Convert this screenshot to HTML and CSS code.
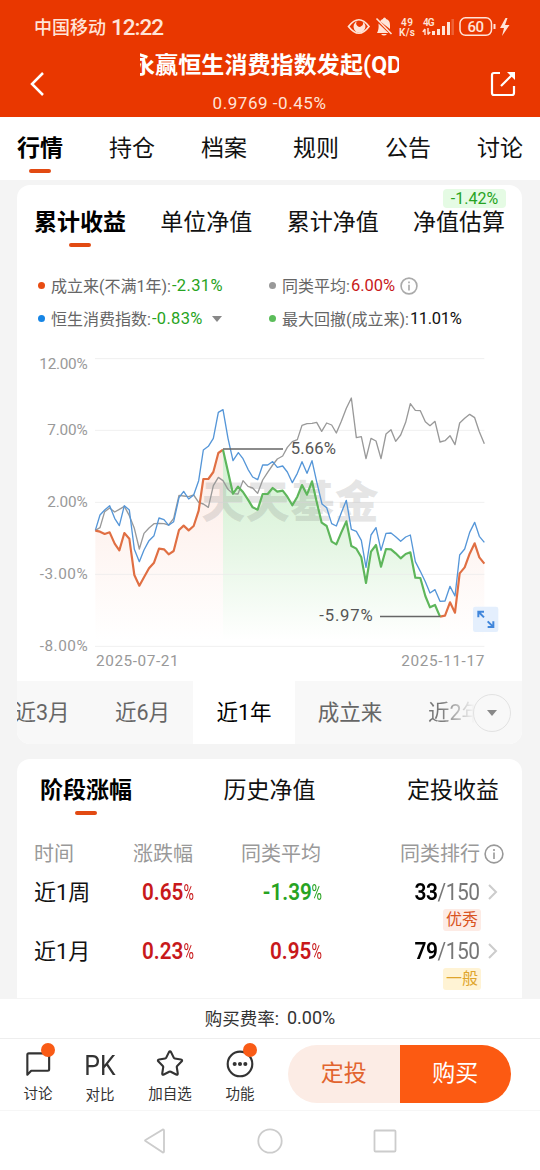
FILE: index.html
```html
<!DOCTYPE html>
<html lang="zh-CN">
<head>
<meta charset="utf-8">
<meta name="viewport" content="width=device-width">
<title>基金详情</title>
<link rel="stylesheet" href="styles.css">
</head>
<body>
<div class="screen">
  <header class="header">
    <div class="status">
      <span class="carrier">中国移动</span><span class="clock">12:22</span>
      <svg class="status-icons" width="166" height="24" viewBox="0 0 166 24" fill="none" stroke="#ffe4d8">
        <path d="M1.500 12.500Q12-1 22 12.500Q12 26 1.500 12.500Z" stroke-width="1.700"/>
        <path d="M10.500 7a6 6 0 1 0 5 .5a3 3 0 0 1-1 4.500a3 3 0 0 1-4-5Z" fill="#ffe4d8" stroke="none"/>
        <path d="M33 7.200Q35 5 36 5a1.500 1.500 0 0 1 3 0Q43 6 43 11v4ZM31.500 9.500L41.500 19H30Q32 16 31.500 9.500ZM34 20h6q-3 3-6 0Z" fill="#ffe4d8" stroke="none"/>
        <path d="M29.500 4.500L44.500 20" stroke-width="1.600"/>
        <g class="tiny" fill="#ffe4d8" stroke="none"><text x="54" y="12" textLength="12">49</text><text x="52" y="21.500" textLength="16">K/s</text><text x="76" y="11.500" textLength="11.500">4G</text></g>
        <path d="M78 15v6M75.800 18l2.200-3M81 14v6.500M83.200 18L81 20.500" stroke-width="1.400"/>
        <path d="M86.500 17v4M91.500 15v6M96.500 12v9M101.500 8v13" stroke-width="3"/>
        <path d="M105.700 5v16" stroke-width="2.500" opacity=".25"/>
        <rect x="113" y="3.800" width="31.500" height="17.500" rx="5.500" stroke-width="1.500"/>
        <path d="M147.500 10v5" stroke-width="2"/>
        <text class="battery" x="120.500" y="18" textLength="16.500" fill="#ffe4d8" stroke="none">60</text>
        <path d="M158.500 4L153 14h4l-2 8 7.500-11h-4.500l2.500-7Z" fill="#ffe4d8" stroke="none"/>
      </svg>
    </div>
    <div class="titlebar">
      <svg class="back" width="16" height="26" viewBox="0 0 16 26"><path d="M14 2L3 13l11 11" fill="none" stroke="#fff" stroke-width="2.500"/></svg>
      <div class="title-block">
        <div class="title-clip"><h1 class="title">永赢恒生消费指数发起(QD</h1></div>
        <div class="quote">0.9769 -0.45%</div>
      </div>
      <svg class="share" width="26" height="26" viewBox="0 0 26 26" fill="none" stroke="#fff" stroke-width="2.200"><path d="M10 2H4Q2 2 2 4v18q0 2 2 2h18q2 0 2-2v-7M11 15L23 3"/><path d="M17 1h8v8Z" fill="#fff" stroke="none"/></svg>
    </div>
  </header>

  <nav class="tabs">
    <span class="tab active">行情</span><span class="tab">持仓</span><span class="tab">档案</span><span class="tab">规则</span><span class="tab">公告</span><span class="tab">讨论</span>
  </nav>

  <main class="content">
    <section class="card">
      <div class="card-tabs">
        <span class="tab active">累计收益</span><span class="tab">单位净值</span><span class="tab">累计净值</span><span class="tab">净值估算<em class="tag">-1.42%</em></span>
      </div>
      <div class="legend">
        <div class="legend-item"><i class="dot orange"></i><span class="name">成立来(不满1年):</span><span class="num down">-2.31%</span></div>
        <div class="legend-item"><i class="dot gray"></i><span class="name">同类平均:</span><span class="num up">6.00%</span>
          <svg class="info" width="18" height="18" viewBox="0 0 20 20"><circle cx="10" cy="10" r="8.800"/><path d="M10 8.500V15M10 5v2"/></svg></div>
        <div class="legend-item"><i class="dot blue"></i><span class="name">恒生消费指数:</span><span class="num down">-0.83%</span><i class="caret"></i></div>
        <div class="legend-item"><i class="dot green"></i><span class="name">最大回撤(成立来):</span><span class="num plain">11.01%</span></div>
      </div>
      <svg class="chart" width="500" height="336" viewBox="0 0 1500 1008">
        <defs>
          <linearGradient id="warm" gradientUnits="userSpaceOnUse" x1="0" y1="314" x2="0" y2="885"><stop offset="0" stop-color="#fdebe5"/><stop offset=".5" stop-color="#fef5f2"/><stop offset="1" stop-color="#fff"/></linearGradient>
          <linearGradient id="cool" gradientUnits="userSpaceOnUse" x1="0" y1="314" x2="0" y2="885"><stop offset="0" stop-color="#d0f0d0"/><stop offset=".5" stop-color="#e5f6e4"/><stop offset="1" stop-color="#fff"/></linearGradient>
        </defs>
        <path fill="url(#warm)" d="M226 557L240 560 254 567 269 562 284 596 298 616 313 564 328 581 343 690 358 722 372 697 387 670 402 653 417 611 432 613 446 628 461 618 477 555 491 542 506 556 521 543 536 497 550 402 565 402 580 381 595 324 609 314V885H226ZM1260 815L1275 812 1290 772 1305 803 1319 685 1334 667 1349 626 1364 595 1378 637 1393 656V885H1260Z"/>
        <path fill="url(#cool)" d="M609 314L624 380 639 446 654 425 669 441 684 464 698 487 713 494 728 447 743 447 758 429 772 440 788 437 802 455 817 481 832 455 846 420 861 449 876 409 890 470 905 533 920 543 935 590 949 598 964 562 979 529 994 603 1009 611 1024 637 1038 714 1053 620 1068 600 1083 665 1098 612 1113 613 1127 625 1142 640 1157 627 1171 622 1186 698 1201 699 1216 753 1230 787 1245 780 1260 815V885H609Z"/>
        <path class="grid" d="M225 41H1393M225 256H1393M225 472H1393M225 688H1393M225 904H1393"/>
        <text class="watermark" x="544" y="519" textLength="532">天天基金</text>
        <polyline class="line average" points="226,556 240,548 254,500 269,489 284,501 298,493 313,484 328,512 343,550 358,612 372,565 387,549 402,536 417,535 432,536 446,540 461,520 477,451 491,453 506,455 521,450 536,472 550,477 565,487 580,422 595,397 609,407 624,433 639,446 654,447 669,407 684,424 698,429 713,445 728,405 743,382 758,360 772,342 788,333 802,307 817,290 832,284 846,241 861,236 876,235 890,232 905,259 920,234 935,240 949,264 964,229 979,190 994,159 1009,278 1024,275 1038,341 1053,280 1068,288 1083,341 1098,267 1113,254 1127,289 1142,270 1157,232 1171,176 1186,196 1201,197 1216,230 1230,242 1245,229 1260,291 1275,287 1290,272 1305,299 1319,234 1334,220 1349,208 1364,218 1378,260 1393,296"/>
        <polyline class="line index" points="226,556 240,510 254,495 269,482 284,520 298,542 313,482 328,495 343,613 358,650 372,615 387,587 402,572 417,519 432,524 446,541 461,530 477,458 491,439 506,462 521,450 536,407 550,315 565,304 580,280 595,202 609,194 624,280 639,347 655,323 669,341 684,373 698,396 713,404 728,360 743,360 758,350 772,367 788,363 802,381 817,413 832,385 846,350 861,385 876,347 890,410 906,477 920,488 935,536 949,543 964,503 979,466 994,553 1009,559 1024,586 1038,667 1053,570 1068,548 1083,616 1098,565 1113,564 1127,575 1142,589 1157,576 1171,570 1186,650 1201,679 1216,710 1230,744 1245,734 1260,769 1275,768 1290,724 1305,753 1319,630 1334,612 1349,562 1364,532 1378,574 1393,592"/>
        <path class="line fund" d="M226 557L240 560 254 567 269 562 284 596 298 616 313 564 328 581 343 690 358 722 372 697 387 670 402 653 417 611 432 613 446 628 461 618 477 555 491 542 506 556 521 543 536 497 550 402 565 402 580 381 595 324 609 314M1260 815L1275 812 1290 772 1305 803 1319 685 1334 667 1349 626 1364 595 1378 637 1393 656"/>
        <polyline class="line drawdown" points="609,314 624,380 639,446 654,425 669,441 684,464 698,487 713,494 728,447 743,447 758,429 772,440 788,437 802,455 817,481 832,455 846,420 861,449 876,409 890,470 905,533 920,543 935,590 949,598 964,562 979,529 994,603 1009,611 1024,637 1038,714 1053,620 1068,600 1083,665 1098,612 1113,613 1127,625 1142,640 1157,627 1171,622 1186,698 1201,699 1216,753 1230,787 1245,780 1260,815"/>
        <path class="leader" d="M609 312H789M1080 814.500H1260"/>
        <g class="callout"><text x="812" y="328" textLength="136">5.66%</text><text x="898" y="829" textLength="160">-5.97%</text></g>
        <g class="axis">
          <text x="58" y="73" textLength="145">12.00%</text><text x="82" y="269" textLength="121">7.00%</text><text x="82" y="485" textLength="121">2.00%</text><text x="59" y="701" textLength="144">-3.00%</text><text x="59" y="917" textLength="144">-8.00%</text>
          <text x="228" y="963" textLength="248">2025-07-21</text><text x="1144" y="963" textLength="249">2025-11-17</text>
        </g>
        <rect x="1359" y="785" width="76" height="76" rx="7" fill="#e4effd"/>
        <path d="M1375 817V800H1392M1376 801L1392 817M1403 846H1420V829M1419 845L1403 829" fill="none" stroke="#4086db" stroke-width="6"/>
      </svg>
      <div class="periods">
        <span class="period">近3月</span><span class="period">近6月</span><span class="period current">近1年</span><span class="period">成立来</span><span class="period fading">近2年</span>
        <span class="more"><i class="caret"></i></span>
      </div>
    </section>

    <section class="card stage">
      <div class="card-tabs stage-tabs"><span class="tab active">阶段涨幅</span><span class="tab">历史净值</span><span class="tab">定投收益</span></div>
      <div class="row head"><span>时间</span><span class="cell">涨跌幅</span><span class="cell">同类平均</span><span class="cell rank">同类排行</span>
        <svg class="info" width="20" height="20" viewBox="0 0 20 20"><circle cx="10" cy="10" r="8.900"/><path d="M10 8.500V15M10 5v2"/></svg></div>
      <div class="row data"><span class="when">近1周</span><b class="cell up"><span class="fig">0.65<small>%</small></span></b><b class="cell down"><span class="fig">-1.39<small>%</small></span></b><span class="cell rank"><span class="place"><b>33</b><span class="total">/150</span></span></span><svg class="go" width="10" height="16" viewBox="0 0 10 16"><path d="M1 1l7 7-7 7"/></svg></div>
      <div class="badge-line"><span class="badge good">优秀</span></div>
      <div class="row data"><span class="when">近1月</span><b class="cell up"><span class="fig">0.23<small>%</small></span></b><b class="cell up"><span class="fig">0.95<small>%</small></span></b><span class="cell rank"><span class="place"><b>79</b><span class="total">/150</span></span></span><svg class="go" width="10" height="16" viewBox="0 0 10 16"><path d="M1 1l7 7-7 7"/></svg></div>
      <div class="badge-line"><span class="badge fair">一般</span></div>
    </section>
  </main>

  <div class="fee"><span>购买费率:</span><span class="fee-num">0.00%</span></div>

  <footer class="actions">
    <div class="action"><svg width="32" height="32" viewBox="0 0 32 32"><path d="M5 27.500V7q0-1.500 1.500-1.500H26q1.500 0 1.500 1.500v15q0 1.500-1.500 1.500H9Z"/></svg><i class="notice"></i><span>讨论</span></div>
    <div class="action pk"><strong>PK</strong><span>对比</span></div>
    <div class="action star"><svg width="32" height="32" viewBox="0 0 32 32"><path d="M14.800 4.500q1.200-2 2.400 0L20 10.200q.3.600 1 .700l6.200 1q2.200.400.700 2.100l-4.500 4.500q-.5.500-.4 1.200l1 6.500q.2 2-1.600 1.200L16.800 24.500q-.8-.4-1.600 0L9.600 27.400q-1.800.800-1.600-1.200l1-6.500q.1-.7-.4-1.200L4.100 14q-1.500-1.700.7-2.100l6.200-1q.7-.1 1-.7Z"/></svg><span>加自选</span></div>
    <div class="action more-action"><svg width="32" height="32" viewBox="0 0 32 32"><circle cx="16" cy="16.500" r="12.700"/><path class="dots" d="M10.500 16.500h.01M16 16.500h.01M21.500 16.500h.01"/></svg><i class="notice"></i><span>功能</span></div>
    <div class="buttons"><span class="plan">定投</span><span class="buy">购买</span></div>
  </footer>

  <div class="sysnav">
    <svg width="26" height="28" viewBox="0 0 26 28"><path d="M3.500 14Q2.500 13.500 3.500 13L21 2.500q1 0 1 1v21q0 1-1 1Z"/></svg>
    <svg width="28" height="28" viewBox="0 0 28 28"><circle cx="14" cy="14" r="11.700"/></svg>
    <svg width="26" height="28" viewBox="0 0 26 28"><rect x="2.500" y="3.500" width="21" height="21" rx="1"/></svg>
  </div>
</div>
</body>
</html>
```

FILE: styles.css
```css
* { box-sizing: border-box; }
body { margin: 0; font-family: Roboto, "Noto Sans CJK SC", sans-serif; color: #111; background: #f4f4f4; }
.screen { display: flex; flex-direction: column; width: 540px; height: 1170px; overflow: hidden; }
em, i { font-style: normal; }
.up { color: #c8191b; }
.down { color: #27a322; }

.header { height: 117px; background: #e93700; color: #fff; }
.status { display: flex; align-items: center; height: 52px; padding: 0 27px 0 34px; color: #ffe4d8; }
.carrier { font-size: 18px; font-weight: 500; }
.clock { margin-left: 5px; padding-top: 2px; font-size: 22.500px; font-weight: 500; line-height: 26px; letter-spacing: -1px; }
.status-icons { margin-left: auto; }
.tiny { font-size: 10px; font-weight: 600; }
.battery { font-size: 15px; font-weight: 500; }
.titlebar { display: flex; padding: 0 24px 0 29px; }
.back { margin-top: 19px; }
.share { margin: 19px 0 0 auto; }
.title-block { margin-left: 95px; width: 259px; }
.title-clip { height: 32px; overflow: hidden; }
.title { margin: 0 0 0 -8px; font-size: 23px; line-height: 28px; font-weight: 700; white-space: nowrap; letter-spacing: .1px; }
.quote { text-align: center; font-size: 17px; line-height: 39px; letter-spacing: .55px; color: #ffe4d8; }

.tabs { display: flex; justify-content: space-between; height: 63px; padding: 14px 17px 0; background: #fff; }
.tab { position: relative; font-size: 23px; line-height: 36px; white-space: nowrap; color: #111; }
.tab.active { font-weight: 700; color: #000; }
.tab.active::after { content: ""; position: absolute; left: calc(50% - 11px); top: 38px; width: 22px; height: 4px; border-radius: 2px; background: #e24a12; }

.content { display: flex; flex-direction: column; gap: 15px; height: 818px; padding: 5px 18px 0 17px; overflow: hidden; }
.card { flex: none; border-radius: 13px; background: #fff; overflow: hidden; }
.card-tabs { display: flex; justify-content: space-between; height: 87px; padding: 20px 17px 0; }
.tag { position: absolute; right: -1px; top: -16px; width: 63px; border-radius: 4px; background: #e5fbe4; color: #27a322; text-align: center; font-size: 16px; line-height: 20px; height: 19px; }
.legend { display: grid; grid-template-columns: 231px 1fr; grid-auto-rows: 33px; height: 73px; padding: 0 0 0 21px; margin-top: -3px; }
.legend-item { display: flex; align-items: center; font-size: 16px; white-space: nowrap; color: #666; }
.name { margin-top: -2px; }
.dot { width: 7px; height: 7px; margin-right: 6px; border-radius: 50%; }
.dot.orange { background: #e84c12; }
.dot.blue { background: #1685e5; }
.dot.gray { background: #999; }
.dot.green { background: #5bbd5a; }
.num { margin-left: 1px; font-size: 16.500px; }
.num.down { letter-spacing: .35px; }
.num.plain { color: #111; letter-spacing: -.35px; }
.info { fill: none; stroke: #aaa; stroke-width: 1.800; }
.legend .info { margin-left: 5px; }
.caret { width: 0; height: 0; border: 5px solid transparent; border-top: 6px solid #888; border-bottom: 0; }
.legend .caret { margin-left: 9px; }

.chart { display: block; margin: 3px 0 0 3px; }
.grid { stroke: #e9e9e9; stroke-opacity: .75; stroke-width: 3; }
.watermark { font-family: "Noto Sans CJK SC", sans-serif; font-size: 132px; font-weight: 900; fill: #777; fill-opacity: .19; }
.line { fill: none; stroke-linejoin: round; }
.average { stroke: #999; stroke-width: 4; }
.index { stroke: #5596d8; stroke-width: 4; }
.fund { stroke: #e06f43; stroke-width: 6.500; }
.drawdown { stroke: #5eb65b; stroke-width: 6.500; }
.leader { stroke: #666; stroke-width: 4; }
.callout { font-size: 50px; fill: #555; }
.axis { font-size: 46px; fill: #999; }

.periods { position: relative; display: flex; height: 63px; background: #f8f8f8; }
.period { flex: none; width: 102px; text-align: center; font-size: 21.500px; line-height: 64px; color: #666; }
.period:first-child { width: 74px; margin-left: -12px; }
.period:nth-child(2) { width: 114px; padding-left: 13px; }
.period.current { background: #fff; color: #000; }
.period:nth-child(4) { width: 110px; }
.period.fading { width: 60px; text-align: left; margin-left: 23px; background: linear-gradient(90deg, #777 20%, #f8f8f8 78%); -webkit-background-clip: text; background-clip: text; color: transparent; }
.more { position: absolute; left: 456px; top: 13px; display: flex; align-items: center; justify-content: center; width: 38px; height: 38px; border: 1px solid #e2e2e2; border-radius: 50%; background: #f8f8f8; }

.stage { height: 260px; border-radius: 13px 13px 0 0; }
.stage-tabs { height: 79px; padding: 14px 23px 0; }
.row { display: grid; grid-template-columns: 70px 89px 128px 159px auto; align-items: center; padding-left: 17px; }
.cell { text-align: right; }
.head { height: 32px; font-size: 20px; line-height: 29px; color: #999; }
.head .info { margin-left: 4px; stroke: #999; stroke-width: 1.600; }
.data { height: 44px; font-size: 22px; color: #111; }
.when { margin-top: -5px; }
.data .cell { font-size: 23px; }
.fig { display: inline-block; transform: translateX(3px) scaleX(.9); transform-origin: right; font-weight: 600; }
.fig small { font-size: 22px; font-weight: 400; display: inline-block; width: 14px; transform: scaleX(.72); transform-origin: left; }
.place { display: inline-block; transform: scaleX(.91); transform-origin: right; }
.rank b { font-weight: 600; letter-spacing: -.5px; color: #000; }
.total { color: #777; letter-spacing: -.5px; }
.go { margin-left: 8px; fill: none; stroke: #ccc; stroke-width: 2; }
.badge-line { height: 15px; padding-right: 41px; display: flex; justify-content: flex-end; }
.badge { margin-top: -5px; width: 38px; height: 22px; border-radius: 3px; font-size: 16px; line-height: 21px; text-align: center; }
.good { background: #fdebe5; color: #d9531f; }
.fair { background: #fff3d4; color: #dfa52d; }

.fee { display: flex; justify-content: center; align-items: center; gap: 8px; height: 40px; background: #fff; font-size: 17.500px; color: #333; border-top: 1px solid #f4f4f4; }
.fee span:first-child { margin-top: -3px; }
.fee-num { font-size: 18px; margin-top: -2px; }
.actions { display: flex; height: 72px; border-top: 1px solid #eee; background: #fff; padding-left: 7px; }
.action { flex: none; position: relative; width: 62px; padding-top: 9px; display: flex; flex-direction: column; align-items: center; font-size: 14.500px; line-height: 31px; color: #333; white-space: nowrap; }
.action svg { fill: none; stroke: #333; stroke-width: 2.200; stroke-linejoin: round; }
.action .dots { stroke-width: 4.200; stroke-linecap: round; }
.action strong { height: 32px; font-size: 27px; line-height: 36px; font-weight: 400; transform: scaleX(.92); }
.star { width: 78px; }
.notice { position: absolute; left: 34px; top: 4px; width: 14px; height: 14px; border-radius: 50%; background: #f95b16; }
.buttons { display: flex; flex: none; width: 223px; height: 58px; margin: 6px 0 0 17px; border-radius: 29px; overflow: hidden; font-size: 23px; line-height: 58px; text-align: center; }
.buttons span { flex: 1; }
.plan { background: #fcece5; color: #e2642f; }
.buy { background: #fc5a12; color: #fff; }

.sysnav { display: flex; align-items: center; justify-content: center; gap: 88px; height: 60px; border-top: 1px solid #f6f6f6; background: #fff; }
.sysnav svg { fill: none; stroke: #ccc; stroke-width: 1.800; }
```
